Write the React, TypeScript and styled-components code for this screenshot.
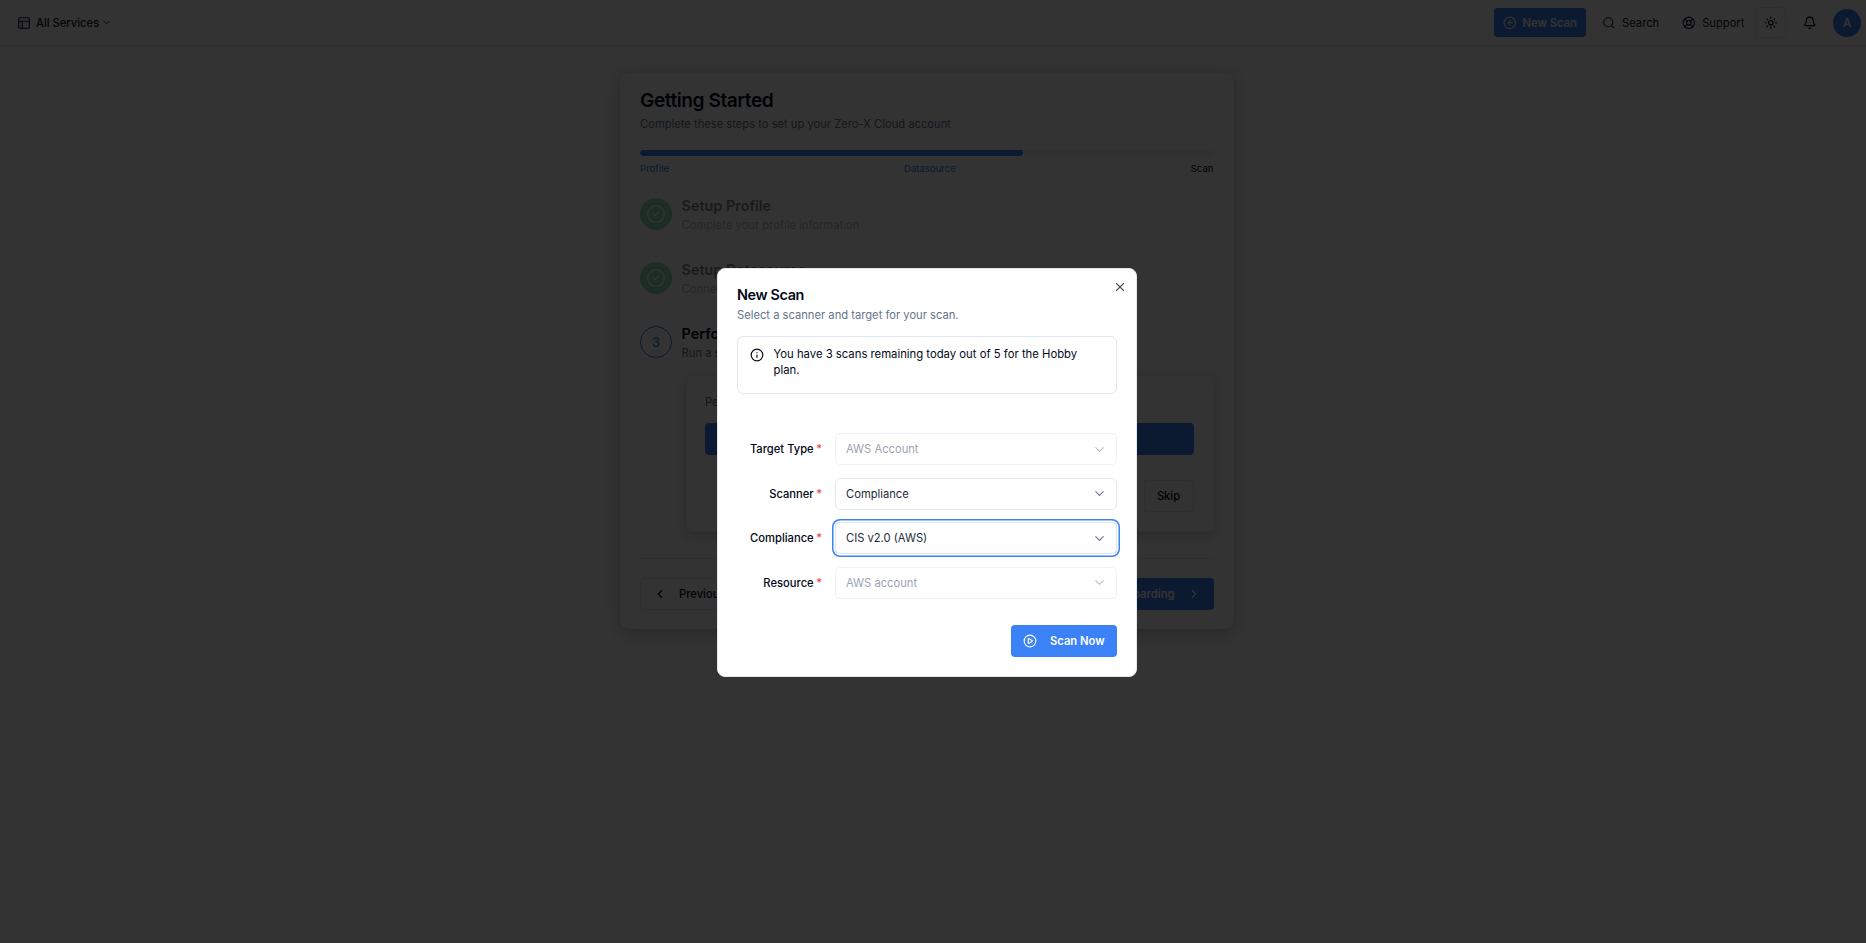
import React from "react";
import styled, { createGlobalStyle } from "styled-components";
import {
  PanelsTopLeft,
  ChevronDown,
  ChevronLeft,
  ChevronRight,
  CirclePlus,
  CirclePlay,
  CircleCheck,
  Search,
  LifeBuoy,
  Sun,
  Bell,
  X,
  Info,
} from "lucide-react";

const Global = createGlobalStyle`
  html, body { margin: 0; padding: 0; height: 100%; background: #fff; overflow: hidden; }
  body { font-family: Inter, "Liberation Sans", sans-serif; color: #020817; }
  #root { height: 100%; }
  * { box-sizing: border-box; }
`;

const Page = styled.div`
  height: 943px;
  display: flex;
  flex-direction: column;
`;

const Header = styled.header`
  height: 46px;
  flex: none;
  display: flex;
  align-items: center;
  justify-content: space-between;
  padding: 0 5px 0 17px;
  border-bottom: 1px solid #e2e8f0;
`;

const Services = styled.div`
  display: flex;
  align-items: center;
  gap: 5px;
  font-size: 11.2px;
  font-weight: 500;
  color: #0f172a;
`;

const ServicesCaret = styled(ChevronDown)`
  margin-left: -3px;
`;

const HeaderActions = styled.div`
  display: flex;
  align-items: center;
`;

const NewScanButton = styled.button`
  width: 92px;
  height: 29px;
  border: 0;
  border-radius: 4px;
  background: #3b82f6;
  color: #fff;
  font: 600 11.2px Inter, sans-serif;
  display: flex;
  align-items: center;
  justify-content: center;
  gap: 5.6px;
  margin-right: 16px;
`;

const HeaderLink = styled.div<{ $mr: number }>`
  display: flex;
  align-items: center;
  gap: 6.4px;
  font-size: 11.2px;
  font-weight: 400;
  color: #0f172a;
  margin-right: ${(p) => p.$mr}px;
`;

const ThemeButton = styled.div`
  width: 31px;
  height: 31px;
  border: 1px solid #e2e8f0;
  border-radius: 4px;
  display: flex;
  align-items: center;
  justify-content: center;
  margin-right: 17px;
`;

const Avatar = styled.div`
  width: 28px;
  height: 28px;
  border-radius: 50%;
  background: #3b82f6;
  color: #fff;
  font-size: 11.2px;
  font-weight: 600;
  display: flex;
  align-items: center;
  justify-content: center;
  margin-left: 16px;
`;

const Main = styled.main`
  flex: 1;
  display: flex;
  justify-content: center;
  align-items: flex-start;
  padding: 26px 12px 0 0;
`;

const Card = styled.section`
  width: 614px;
  height: 557px;
  border: 1px solid #e8edf3;
  border-radius: 8px;
  background: #fff;
  box-shadow: 0 4px 18px rgba(0, 0, 0, 0.25);
  padding: 16px 19.5px 16px 19px;
  display: flex;
  flex-direction: column;
  & > * {
    flex: none;
  }
`;

const Title = styled.h1`
  margin: 0;
  font-size: 19.2px;
  letter-spacing: -0.48px;
  line-height: 22px;
  font-weight: 600;
  color: #020817;
`;

const Subtitle = styled.p`
  margin: 4px 0 0;
  font-size: 11.2px;
  line-height: 18px;
  color: #64748b;
`;

const Track = styled.div`
  height: 6px;
  border-radius: 3px;
  background: #f1f5f9;
  margin-top: 17px;
  overflow: hidden;
`;

const Fill = styled.div`
  height: 100%;
  background: #3b82f6;
  border-radius: 3px;
`;

const StepLabels = styled.div`
  display: flex;
  justify-content: space-between;
  margin-top: 6px;
  font-size: 9.6px;
  line-height: 14px;
`;

const StepLabel = styled.span<{ $done?: boolean }>`
  color: ${(p) => (p.$done ? "#3b82f6" : "#020817")};
`;

const Steps = styled.div`
  display: flex;
  flex-direction: column;
  gap: 29px;
  margin-top: 22px;
`;

const Step = styled.div<{ $muted?: boolean }>`
  display: flex;
  gap: 9.6px;
  opacity: ${(p) => (p.$muted ? 0.5 : 1)};
`;

const GreenBadge = styled.div`
  width: 32px;
  height: 32px;
  flex: none;
  border-radius: 50%;
  background: #22c55e;
  color: #fff;
  display: flex;
  align-items: center;
  justify-content: center;
`;

const NumberBadge = styled.div`
  width: 32px;
  height: 32px;
  flex: none;
  border-radius: 50%;
  border: 1.5px solid #3b82f6;
  color: #3b82f6;
  font-size: 12.8px;
  font-weight: 500;
  display: flex;
  align-items: center;
  justify-content: center;
`;

const StepTitle = styled.div`
  font-size: 14.4px;
  line-height: 16px;
  font-weight: 600;
  color: #020817;
`;

const StepText = styled.div`
  font-size: 11.2px;
  line-height: 16px;
  margin-top: 3px;
  color: #64748b;
`;

const Action = styled.div`
  margin: 14px 0 0 46px;
  height: 157px;
  border: 1px solid #e8edf3;
  border-radius: 6px;
  box-shadow: 0 4px 14px rgba(0, 0, 0, 0.2);
  padding: 17px 19px 17px 18px;
  display: flex;
  flex-direction: column;
  & > * {
    flex: none;
  }
`;

const ActionText = styled.div`
  font-size: 11.2px;
  line-height: 18px;
  color: #64748b;
`;

const StartButton = styled.div`
  height: 32px;
  margin-top: 12px;
  border-radius: 4px;
  background: #3b82f6;
`;

const SkipButton = styled.div`
  align-self: flex-end;
  width: 50px;
  height: 32px;
  margin-top: 25px;
  border: 1px solid #e2e8f0;
  border-radius: 4px;
  font-size: 11.2px;
  font-weight: 500;
  display: flex;
  align-items: center;
  justify-content: center;
`;

const Footer = styled.div`
  margin-top: 26px;
  border-top: 1px solid #e2e8f0;
  padding-top: 19px;
  display: flex;
  justify-content: space-between;
`;

const PrevButton = styled.div`
  height: 32px;
  padding: 0 12px;
  border: 1px solid #e2e8f0;
  border-radius: 4px;
  display: flex;
  align-items: center;
  gap: 12px;
  font-size: 11.2px;
  font-weight: 500;
`;

const NextButton = styled.div`
  height: 32px;
  padding: 0 13px;
  border-radius: 4px;
  background: #3b82f6;
  color: #fff;
  display: flex;
  align-items: center;
  gap: 12px;
  font-size: 11.2px;
  font-weight: 600;
`;

const Overlay = styled.div`
  position: fixed;
  inset: 0;
  background: rgba(0, 0, 0, 0.8);
  backdrop-filter: blur(0.7px);
  display: flex;
  align-items: flex-start;
  justify-content: center;
  padding: 268px 12px 0 0;
`;

const Modal = styled.div`
  position: relative;
  width: 420px;
  height: 409px;
  background: #fff;
  border: 1px solid #e2e8f0;
  border-radius: 8px;
  padding: 17px 19px;
  display: flex;
  flex-direction: column;
  & > * {
    flex: none;
  }
`;

const CloseButton = styled.div`
  position: absolute;
  top: 11px;
  right: 9px;
  color: #475569;
  display: flex;
`;

const ModalTitle = styled.h2`
  margin: 0;
  font-size: 14.4px;
  letter-spacing: -0.36px;
  line-height: 18px;
  font-weight: 600;
  color: #020817;
`;

const ModalSub = styled.p`
  margin: 2px 0 0;
  font-size: 11.2px;
  line-height: 18px;
  color: #64748b;
`;

const Alert = styled.div`
  margin-top: 11.5px;
  height: 58px;
  border: 1px solid #e2e8f0;
  border-radius: 6px;
  padding: 9px 12px;
  display: flex;
  gap: 9.5px;
  font-size: 11.3px;
  line-height: 16px;
  color: #020817;
`;

const AlertIcon = styled.div`
  flex: none;
  padding-top: 2px;
  display: flex;
  align-items: flex-start;
`;

const AlertText = styled.span`
  max-width: 310px;
`;

const Form = styled.div`
  margin-top: 39.5px;
  display: flex;
  flex-direction: column;
  gap: 12.67px;
`;

const Row = styled.div`
  display: grid;
  grid-template-columns: 85px 282px;
  column-gap: 13px;
  align-items: center;
`;

const Label = styled.label`
  text-align: right;
  font-size: 11.2px;
  font-weight: 500;
  color: #020817;
`;

const Star = styled.span`
  color: #ef4444;
  margin-left: 2.5px;
`;

const Select = styled.div<{ $disabled?: boolean; $focus?: boolean }>`
  height: 32px;
  padding: 0 9px 0 10px;
  border: 1px solid ${(p) => (p.$disabled ? "#eef2f7" : "#e2e8f0")};
  border-radius: 5px;
  display: flex;
  align-items: center;
  justify-content: space-between;
  font-size: 11.2px;
  color: ${(p) => (p.$disabled ? "#9ca3af" : "#1e293b")};
  box-shadow: ${(p) => (p.$focus ? "0 0 0 1.5px #fff, 0 0 0 3px #3b82f6" : "none")};
`;

const ScanButton = styled.button`
  align-self: flex-end;
  margin-top: 26px;
  width: 106px;
  height: 32px;
  border: 0;
  border-radius: 4px;
  background: #3b82f6;
  color: #fff;
  font: 600 11.2px Inter, sans-serif;
  display: flex;
  align-items: center;
  gap: 13px;
  padding: 0 0 0 12px;
`;

const fields = [
  { label: "Target Type", value: "AWS Account", disabled: true },
  { label: "Scanner", value: "Compliance" },
  { label: "Compliance", value: "CIS v2.0 (AWS)", focus: true },
  { label: "Resource", value: "AWS account", disabled: true },
];

export default function App() {
  return (
    <>
      <Global />
      <Page>
        <Header>
          <Services>
            <PanelsTopLeft size={14} />
            All Services
            <ServicesCaret size={11} />
          </Services>
          <HeaderActions>
            <NewScanButton>
              <CirclePlus size={13.6} />
              New Scan
            </NewScanButton>
            <HeaderLink $mr={23}>
              <Search size={13.6} />
              Search
            </HeaderLink>
            <HeaderLink $mr={11}>
              <LifeBuoy size={13.6} />
              Support
            </HeaderLink>
            <ThemeButton>
              <Sun size={13.6} />
            </ThemeButton>
            <Bell size={13.6} />
            <Avatar>A</Avatar>
          </HeaderActions>
        </Header>
        <Main>
          <Card>
            <Title>Getting Started</Title>
            <Subtitle>Complete these steps to set up your Zero-X Cloud account</Subtitle>
            <Track>
              <Fill style={{ width: "66.7%" }} />
            </Track>
            <StepLabels>
              <StepLabel $done>Profile</StepLabel>
              <StepLabel $done>Datasource</StepLabel>
              <StepLabel>Scan</StepLabel>
            </StepLabels>
            <Steps>
              <Step $muted>
                <GreenBadge>
                  <CircleCheck size={20} strokeWidth={1.5} />
                </GreenBadge>
                <div>
                  <StepTitle>Setup Profile</StepTitle>
                  <StepText>Complete your profile information</StepText>
                </div>
              </Step>
              <Step $muted>
                <GreenBadge>
                  <CircleCheck size={20} strokeWidth={1.5} />
                </GreenBadge>
                <div>
                  <StepTitle>Setup Datasource</StepTitle>
                  <StepText>Connect your cloud account</StepText>
                </div>
              </Step>
              <Step>
                <NumberBadge>3</NumberBadge>
                <div>
                  <StepTitle>Perform First Scan</StepTitle>
                  <StepText>Run a scan on your datasource</StepText>
                </div>
              </Step>
            </Steps>
            <Action>
              <ActionText>Perform your first scan to complete onboarding</ActionText>
              <StartButton />
              <SkipButton>Skip</SkipButton>
            </Action>
            <Footer>
              <PrevButton>
                <ChevronLeft size={14} />
                Previous
              </PrevButton>
              <NextButton>
                Complete Onboarding
                <ChevronRight size={14} />
              </NextButton>
            </Footer>
          </Card>
        </Main>
      </Page>
      <Overlay>
        <Modal>
          <CloseButton>
            <X size={14} />
          </CloseButton>
          <ModalTitle>New Scan</ModalTitle>
          <ModalSub>Select a scanner and target for your scan.</ModalSub>
          <Alert>
            <AlertIcon>
              <Info size={14} />
            </AlertIcon>
            <AlertText>You have 3 scans remaining today out of 5 for the Hobby plan.</AlertText>
          </Alert>
          <Form>
            {fields.map((f) => (
              <Row key={f.label}>
                <Label>
                  {f.label}
                  <Star>*</Star>
                </Label>
                <Select $disabled={f.disabled} $focus={f.focus}>
                  {f.value}
                  <ChevronDown size={15} strokeWidth={1.7} color={f.disabled ? "#b6bcc6" : "#64748b"} />
                </Select>
              </Row>
            ))}
          </Form>
          <ScanButton>
            <CirclePlay size={14} />
            Scan Now
          </ScanButton>
        </Modal>
      </Overlay>
    </>
  );
}
